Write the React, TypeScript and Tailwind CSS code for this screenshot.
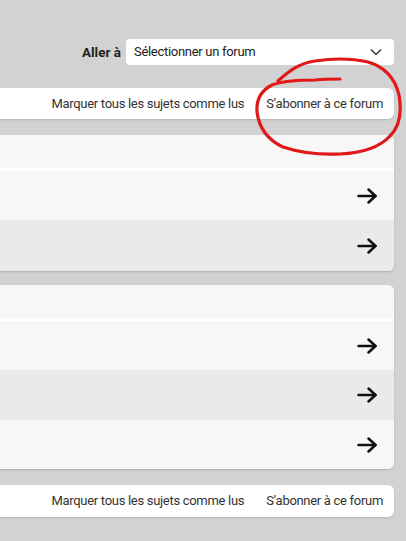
import React from 'react';

const Arrow = () => (
  <svg width="20" height="16" viewBox="0 0 20 16" fill="none" stroke="#111" strokeWidth="2.5" strokeLinecap="round" strokeLinejoin="round">
    <path d="M1.5 8h17" />
    <path d="M11.5 1.5 18.5 8l-7 6.5" />
  </svg>
);

const ActionBar = ({ h }: { h: string }) => (
  <div className={`-ml-2 flex items-center justify-end gap-[22px] rounded-md bg-white pr-[11px] text-[13px] tracking-[-0.3px] text-[#333] shadow-[0_1px_2px_rgba(0,0,0,0.12)] ${h}`}>
    <span>Marquer tous les sujets comme lus</span>
    <span>S’abonner à ce forum</span>
  </div>
);

const Row = ({ alt, h }: { alt?: boolean; h: string }) => (
  <div className={`flex items-center justify-end pr-[17px] ${h} ${alt ? 'bg-[#eaeaea]' : 'bg-[#f7f7f7]'}`}>
    <Arrow />
  </div>
);

const ForumCard = ({ rows }: { rows: { alt?: boolean; h: string }[] }) => (
  <div className="-ml-2 overflow-hidden rounded-md bg-[#f7f7f7] shadow-[0_1px_2px_rgba(0,0,0,0.18)]">
    <div className="h-[36px] border-b-[3px] border-white bg-[#f7f7f7]" />
    {rows.map((r, i) => (
      <Row key={i} alt={r.alt} h={r.h} />
    ))}
  </div>
);

export default function App() {
  return (
    <div
      className="relative h-[541px] w-[406px] overflow-hidden bg-[#d2d2d2] pr-3 pt-[39px]"
      style={{ fontFamily: 'Roboto, "Noto Sans", sans-serif' }}
    >
      <div className="flex items-center justify-end gap-[5px] text-[13px] text-[#222]">
        <span className="text-[13.5px] font-bold">Aller à</span>
        <div className="flex h-[26px] w-[268px] items-center justify-between rounded bg-white pl-2 pr-3 tracking-[-0.3px]">
          <span>Sélectionner un forum</span>
          <svg width="12" height="8" viewBox="0 0 12 8" fill="none" stroke="#333" strokeWidth="1.4">
            <path d="M1 1.5 6 6.5l5-5" />
          </svg>
        </div>
      </div>

      <div className="mt-[23px]">
        <ActionBar h="h-[31px]" />
      </div>

      <div className="mt-4">
        <ForumCard rows={[{ h: 'h-[49px]' }, { alt: true, h: 'h-[51px]' }]} />
      </div>

      <div className="mt-[14px]">
        <ForumCard rows={[{ h: 'h-[49px]' }, { alt: true, h: 'h-[50px]' }, { h: 'h-[49px]' }]} />
      </div>

      <div className="mt-4">
        <ActionBar h="h-[32px]" />
      </div>

      <svg
        className="pointer-events-none absolute left-0 top-0"
        width="406"
        height="541"
        viewBox="0 0 406 541"
        fill="none"
        stroke="#e01818"
        strokeWidth="3.2"
        strokeLinecap="round"
        strokeLinejoin="round"
      >
        <path d="M278 81 C290 70 300 63 315 61 C335 58 355 59 368 62 C385 67 395 78 399 95 C402 112 399 127 390 136 C380 147 362 153 340 154 C318 155 298 152 283 147 C268 140 259 128 257 112 C256 98 262 90 272 85 C282 81 300 80 315 80 C325 79 333 79 340 79" />
      </svg>
    </div>
  );
}
